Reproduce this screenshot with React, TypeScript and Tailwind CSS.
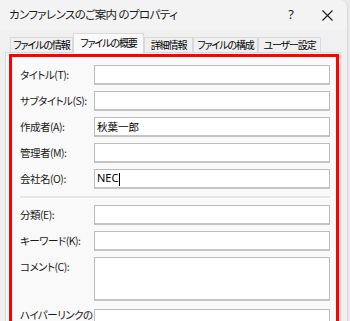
import React from "react";

const jp = "font-['Noto_Sans_CJK_JP',sans-serif] [font-feature-settings:'palt']";

function Field({ label, value, h = 20, top = false, cursor = false, latin = false }: { label: string; value?: string; h?: number; top?: boolean; cursor?: boolean; latin?: boolean }) {
  return (
    <div className={`flex ${top ? "items-start" : "items-center"}`}>
      <div className={`w-[74px] shrink-0 whitespace-nowrap text-[10.5px] tracking-[-0.5px] leading-[14px] text-[#1a1a1a] ${top ? "pt-[3px]" : ""}`}>{label}</div>
      <div
        className={`w-[236px] bg-white border border-[#bcbcbc] border-b-[2px] border-b-[#c4c4c4] flex px-[2px] ${top ? "items-start" : "items-center"}`}
        style={{ height: h }}
      >
        {value && (
          <span className={`${latin ? "text-[11px] font-['Noto_Sans',sans-serif]" : "text-[10.5px]"} leading-[14px] text-black whitespace-nowrap`}>
            {value}
            {cursor && <span className="inline-block w-px h-[13px] bg-black align-middle ml-[1px]" />}
          </span>
        )}
      </div>
    </div>
  );
}

export default function App() {
  const tabs = [
    { t: "ファイルの情報", w: 63 },
    { t: "ファイルの概要", w: 71, sel: true },
    { t: "詳細情報", w: 49 },
    { t: "ファイルの構成", w: 65 },
    { t: "ユーザー設定", w: 63 },
  ];
  return (
    <div className={`w-[350px] h-[321px] bg-[#e9e9e9] overflow-hidden ${jp}`}>
      <div className="w-[348px] h-[321px] bg-[#f0f0f0] rounded-tr-[8px] border-r border-[#d8d8d8] flex flex-col">
        <div className="h-[30px] shrink-0 flex items-center bg-[#f3f3f3] rounded-tr-[8px]">
          <div className="pl-[9px] text-[11.5px] tracking-[-0.6px] text-[#1a1a1a] flex-1 whitespace-nowrap">カンファレンスのご案内 のプロパティ</div>
          <div className="w-[30px] text-center text-[13px] text-[#1a1a1a] font-['Noto_Sans',sans-serif] mr-[6px]">?</div>
          <div className="w-[30px] flex justify-center mr-[5px]">
            <svg width="11" height="11" viewBox="0 0 11 11" stroke="#1a1a1a" strokeWidth="1.1">
              <path d="M0.5 0.5L10.5 10.5M10.5 0.5L0.5 10.5" />
            </svg>
          </div>
        </div>
        <div className="flex items-end pl-[10px] h-[22px] shrink-0">
          {tabs.map((tb) =>
            tb.sel ? (
              <div key={tb.t} className="h-[20px] bg-[#f9f9f9] border border-b-0 border-[#d9d9d9] text-[10px] tracking-[-1.1px] leading-[18px] text-black flex justify-center whitespace-nowrap -mb-px relative z-10" style={{ width: tb.w }}>
                {tb.t}
              </div>
            ) : (
              <div key={tb.t} className="h-[15px] bg-[#f0f0f0] border border-b-0 border-[#d9d9d9] text-[10px] tracking-[-1.1px] leading-[14px] text-black flex justify-center whitespace-nowrap" style={{ width: tb.w }}>
                {tb.t}
              </div>
            )
          )}
        </div>
        <div className="ml-[5px] w-[336px] flex-1 bg-[#f9f9f9] border border-[#d9d9d9] pl-[3px] pt-[1px] pr-px">
          <div className="border-[3px] border-[#ff0000] h-[300px] pl-[8px] pt-[8px] pr-[6px] flex flex-col gap-[6px]">
            <Field label="タイトル(T):" />
            <Field label="サブタイトル(S):" />
            <Field label="作成者(A):" value="秋葉一郎" />
            <Field label="管理者(M):" />
            <Field label="会社名(O):" value="NEC" cursor latin />
            <div className="h-[2px] bg-[#e6e6e6] w-[310px] my-[1px]" />
            <Field label="分類(E):" />
            <Field label="キーワード(K):" />
            <Field label="コメント(C):" h={44} top />
            <div className="flex items-start mt-[2px]">
              <div className="w-[74px] shrink-0 text-[10.5px] tracking-[-0.5px] leading-[14px] text-[#1a1a1a] -mt-[1px] whitespace-nowrap">ハイパーリンクの<br />基点(H):</div>
              <div className="w-[236px] h-[20px] bg-white border border-[#bcbcbc]" />
            </div>
          </div>
        </div>
      </div>
    </div>
  );
}
